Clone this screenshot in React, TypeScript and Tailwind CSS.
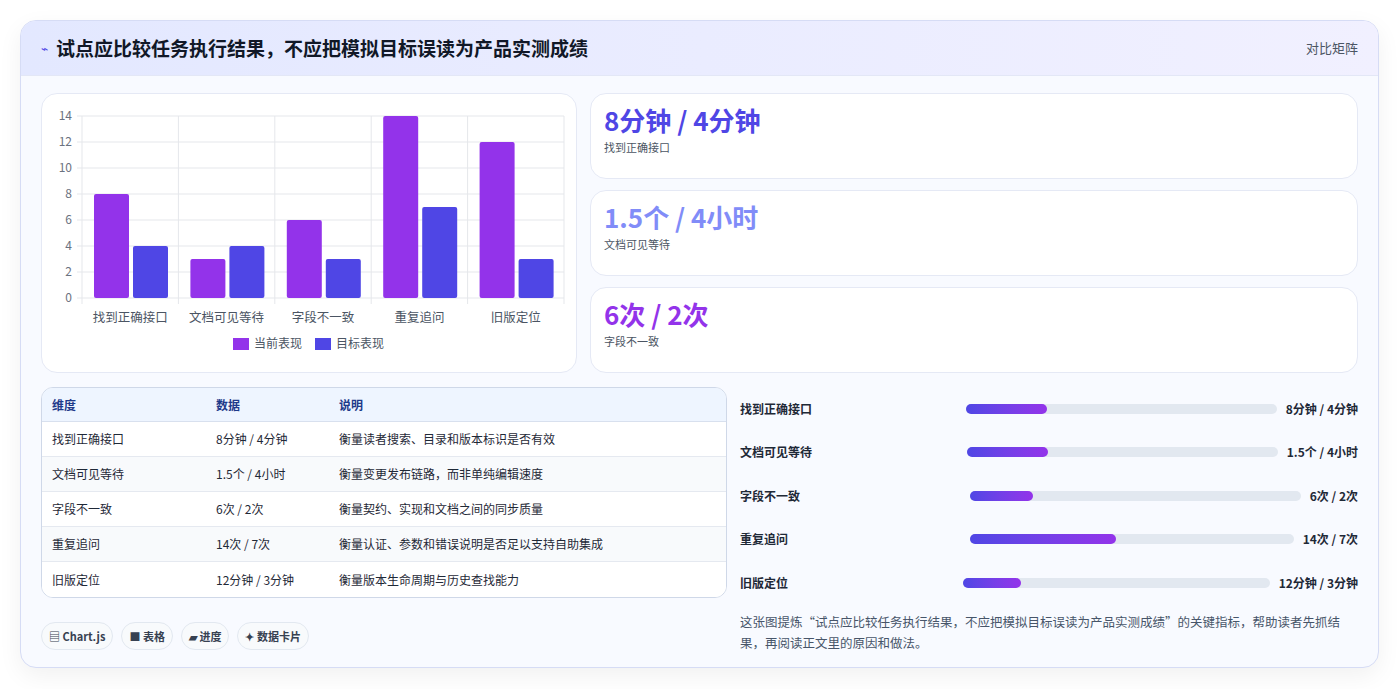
import React from "react";

const labels = ["找到正确接口", "文档可见等待", "字段不一致", "重复追问", "旧版定位"];
const cur = [8, 3, 6, 14, 12];
const tgt = [4, 4, 3, 7, 3];

function Chart() {
  const x0 = 40, y0 = 22, w = 482, h = 182;
  const gw = w / 5, u = h / 14;
  return (
    <svg width="535" height="279" className="block">
      {[0, 2, 4, 6, 8, 10, 12, 14].map((v) => (
        <g key={v}>
          <line x1={x0 - 5} x2={x0 + w} y1={y0 + h - v * u} y2={y0 + h - v * u} stroke="#e5e7eb" />
          <text x={x0 - 10} y={y0 + h - v * u + 4} textAnchor="end" fontSize="12" fill="#6b7280">{v}</text>
        </g>
      ))}
      {[0, 1, 2, 3, 4, 5].map((i) => (
        <line key={i} x1={x0 + i * gw} x2={x0 + i * gw} y1={y0} y2={y0 + h + 6} stroke="#e5e7eb" />
      ))}
      {labels.map((l, i) => (
        <g key={l}>
          <rect x={x0 + i * gw + 12} y={y0 + h - cur[i] * u} width="35" height={cur[i] * u} rx="2" fill="#9333ea" />
          <rect x={x0 + i * gw + 51} y={y0 + h - tgt[i] * u} width="35" height={tgt[i] * u} rx="2" fill="#4f46e5" />
          <text x={x0 + i * gw + gw / 2} y={y0 + h + 24} textAnchor="middle" fontSize="12.5" fill="#4b5563">{l}</text>
        </g>
      ))}
      <rect x="191" y="244" width="16" height="12" fill="#9333ea" />
      <text x="212" y="254" fontSize="12" fill="#4b5563">当前表现</text>
      <rect x="273" y="244" width="16" height="12" fill="#4f46e5" />
      <text x="294" y="254" fontSize="12" fill="#4b5563">目标表现</text>
    </svg>
  );
}

const stats = [
  { v: "8分钟 / 4分钟", l: "找到正确接口", c: "text-[#4f46e5]" },
  { v: "1.5个 / 4小时", l: "文档可见等待", c: "text-[#818cf8]" },
  { v: "6次 / 2次", l: "字段不一致", c: "text-[#9333ea]" },
];

const rows = [
  ["找到正确接口", "8分钟 / 4分钟", "衡量读者搜索、目录和版本标识是否有效"],
  ["文档可见等待", "1.5个 / 4小时", "衡量变更发布链路，而非单纯编辑速度"],
  ["字段不一致", "6次 / 2次", "衡量契约、实现和文档之间的同步质量"],
  ["重复追问", "14次 / 7次", "衡量认证、参数和错误说明是否足以支持自助集成"],
  ["旧版定位", "12分钟 / 3分钟", "衡量版本生命周期与历史查找能力"],
];

const bars = [
  { l: "找到正确接口", v: "8分钟 / 4分钟", p: 26, ml: "ml-0" },
  { l: "文档可见等待", v: "1.5个 / 4小时", p: 26, ml: "ml-px" },
  { l: "字段不一致", v: "6次 / 2次", p: 19, ml: "ml-1" },
  { l: "重复追问", v: "14次 / 7次", p: 45, ml: "ml-1" },
  { l: "旧版定位", v: "12分钟 / 3分钟", p: 19, ml: "-ml-[3px]" },
];

export default function App() {
  return (
    <div className="w-[1399px] h-[689px] bg-white p-5 pb-0 overflow-hidden" style={{ fontFamily: '"Noto Sans CJK SC", "Noto Sans", sans-serif' }}>
      <div className="w-[1359px] h-[648px] rounded-2xl border border-[#d6dcf5] bg-[#f8faff] shadow-[0_8px_24px_rgba(0,0,0,0.06)] overflow-hidden">
        <div className="h-[55px] flex items-center justify-between px-5 bg-gradient-to-r from-[#e3e8ff] to-[#f1f0ff] border-b border-[#e3e7f6]">
          <div className="flex items-center gap-2">
            <span className="text-[#4f46e5] text-xs">⌁</span>
            <span className="text-[19px] font-bold text-[#111827]">试点应比较任务执行结果，不应把模拟目标误读为产品实测成绩</span>
          </div>
          <span className="text-[13px] text-[#4b5563]">对比矩阵</span>
        </div>
        <div className="px-5 pt-[17px] flex flex-col gap-[14px]">
          <div className="flex gap-[13px]">
            <div className="w-[536px] h-[280px] bg-white rounded-2xl border border-[#e5e9f5]">
              <Chart />
            </div>
            <div className="flex-1 flex flex-col gap-[11px]">
              {stats.map((s) => (
                <div key={s.l} className="h-[86px] bg-white rounded-2xl border border-[#e5e9f5] px-[13px] pt-[9px]">
                  <div className={`text-[26px] font-bold leading-[34px] ${s.c}`}>{s.v}</div>
                  <div className="text-[11px] text-[#4b5563] mt-0.5">{s.l}</div>
                </div>
              ))}
            </div>
          </div>
          <div className="flex gap-[13px]">
            <div className="w-[686px] flex flex-col">
              <div className="rounded-xl border border-[#cfd8e8] overflow-hidden bg-white">
                <div className="flex h-[34px] items-center bg-[#eef5ff] border-b border-[#d8e0ee] text-[12px] font-bold text-[#1e3a8a] px-[10px]">
                  <div className="w-[164px]">维度</div>
                  <div className="w-[123px]">数据</div>
                  <div>说明</div>
                </div>
                {rows.map((r, i) => (
                  <div key={r[0]} className={`flex h-[35px] items-center text-[12px] text-[#1f2937] px-[10px] ${i % 2 ? "bg-[#f8fafc]" : "bg-white"} ${i < 4 ? "border-b border-[#e5e9f0]" : ""}`}>
                    <div className="w-[164px]">{r[0]}</div>
                    <div className="w-[123px]">{r[1]}</div>
                    <div>{r[2]}</div>
                  </div>
                ))}
              </div>
              <div className="flex gap-2 mt-[24px]">
                {["▤ Chart.js", "■ 表格", "▰ 进度", "✦ 数据卡片"].map((t) => (
                  <span key={t} className="h-7 px-[7px] flex items-center rounded-full border border-[#e2e8f0] bg-[#f8fafc] text-[11px] font-bold text-[#374151]">{t}</span>
                ))}
              </div>
            </div>
            <div className="flex-1 flex flex-col pr-0">
              {bars.map((b) => (
                <div key={b.l} className="h-[43.5px] flex items-center text-[12px] font-bold text-[#1f2937]">
                  <div className="w-[226px] shrink-0">{b.l}</div>
                  <div className={`flex-1 h-[10px] rounded-full bg-[#e2e8f0] ${b.ml}`}>
                    <div className="h-full rounded-full bg-gradient-to-r from-[#4f46e5] to-[#9333ea]" style={{ width: `${b.p}%` }} />
                  </div>
                  <div className="ml-[9px] whitespace-nowrap">{b.v}</div>
                </div>
              ))}
              <p className="mt-[6px] text-[12.5px] leading-[21px] text-[#475569]">这张图提炼“试点应比较任务执行结果，不应把模拟目标误读为产品实测成绩”的关键指标，帮助读者先抓结果，再阅读正文里的原因和做法。</p>
            </div>
          </div>
        </div>
      </div>
    </div>
  );
}
